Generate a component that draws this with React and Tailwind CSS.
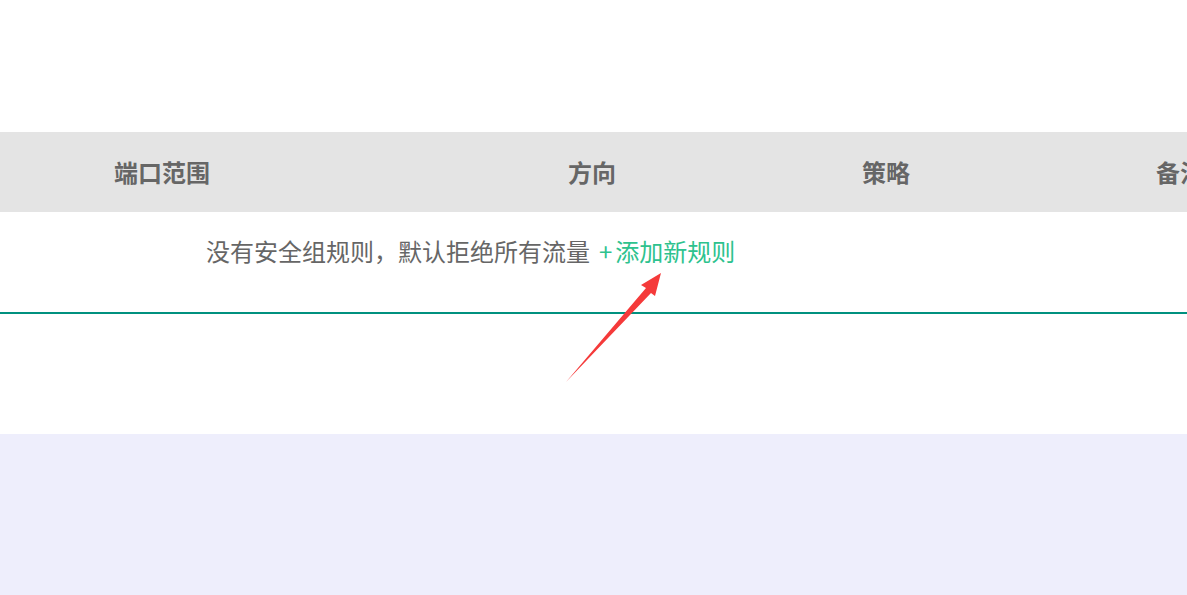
export default function App() {
  const font = { fontFamily: '"Noto Sans CJK SC", "Noto Sans", sans-serif' };
  return (
    <div className="relative w-[1187px] h-[595px] overflow-hidden bg-white" style={font}>
      <div className="h-[132px]"></div>

      {/* table header */}
      <div className="h-[80px] bg-[#e4e4e4] flex items-center overflow-hidden text-[24px] font-bold text-[#666666]">
        <div className="w-[324px] shrink-0 text-center">端口范围</div>
        <div className="w-[121px] shrink-0"></div>
        <div className="w-[294px] shrink-0 text-center">方向</div>
        <div className="w-[294px] shrink-0 text-center">策略</div>
        <div className="w-[294px] shrink-0 text-center">备注</div>
      </div>

      {/* empty row */}
      <div className="h-[102px] border-b-2 border-[#00917f] pl-[206px] pt-[23px] text-[24px] leading-[32px] text-[#666666] whitespace-nowrap">
        没有安全组规则，默认拒绝所有流量
        <a href="#" className="ml-[9px] text-[#2ec28e]">
          <span className="mr-[3px]">+</span>添加新规则
        </a>
      </div>

      <div className="h-[120px]"></div>
      <div className="h-[161px] bg-[#eeeefc]"></div>

      {/* annotation arrow */}
      <svg className="absolute inset-0 pointer-events-none" width="1187" height="595">
        <polygon
          points="566,382 646,288 641,285 661,273 655,296 651,293"
          fill="#f53a3a"
        />
      </svg>
    </div>
  );
}
